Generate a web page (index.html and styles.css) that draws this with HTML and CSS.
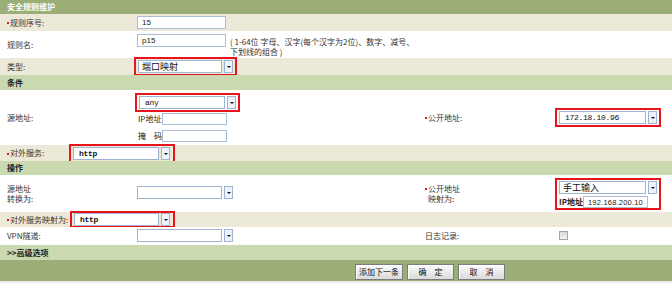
FILE: index.html
```html
<!DOCTYPE html>
<html>
<head>
<meta charset="utf-8">
<link rel="stylesheet" href="styles.css">
</head>
<body>
<div class="panel">
  <div class="hdr">安全规则维护</div>

  <div class="row beige h17">
    <div class="lab"><i class="req"></i>规则序号:</div>
    <div class="ctl"><span class="inp w89">15</span></div>
  </div>

  <div class="row white h27 top">
    <div class="lab self-c">规则名:</div>
    <div class="ctl flex">
      <span class="inp w89 mt3">p15</span>
      <span class="note">( 1-64位 字母、汉字(每个汉字为2位)、数字、减号、<br>下划线的组合 )</span>
    </div>
  </div>

  <div class="row beige h17">
    <div class="lab">类型:</div>
    <div class="ctl">
      <div class="hl">
        <div class="sel"><span class="box cjk w84">端口映射</span><span class="dd"></span></div>
      </div>
    </div>
  </div>

  <div class="sec h15">条件</div>

  <div class="row white h55">
    <div class="lab">源地址:</div>
    <div class="ctl col">
      <div class="hl ml1">
        <div class="sel"><span class="box mono w86">any</span><span class="dd"></span></div>
      </div>
      <div class="pair mt1"><span class="plab">IP地址</span><span class="inp w65"></span></div>
      <div class="pair mt5"><span class="plab">掩　码</span><span class="inp w65"></span></div>
    </div>
    <div class="rlab"><i class="req"></i>公开地址:</div>
    <div class="rctl">
      <div class="hl">
        <div class="sel"><span class="box mono w87">172.18.10.96</span><span class="dd"></span></div>
      </div>
    </div>
  </div>

  <div class="row beige h16">
    <div class="lab n69"><i class="req"></i>对外服务:</div>
    <div class="ctl">
      <div class="hl pr3">
        <div class="sel"><span class="box mono bold w86">http</span><span class="dd"></span></div>
      </div>
    </div>
  </div>

  <div class="sec h14">操作</div>

  <div class="row white h37">
    <div class="lab">源地址<br>转换为:</div>
    <div class="ctl">
      <div class="sel ml3"><span class="box w85"></span><span class="dd"></span></div>
    </div>
    <div class="rlab"><i class="req"></i>公开地址<br><span class="ind">映射为:</span></div>
    <div class="rctl">
      <div class="hl colbox">
        <div class="sel"><span class="box cjk w87">手工输入</span><span class="dd"></span></div>
        <div class="pair2"><span class="plab2">IP地址</span><span class="inp w65 sans">192.168.200.10</span></div>
      </div>
    </div>
  </div>

  <div class="row beige h15">
    <div class="lab n70"><i class="req"></i>对外服务映射为:</div>
    <div class="ctl">
      <div class="hl pr3 short">
        <div class="sel"><span class="box mono bold w85">http</span><span class="dd"></span></div>
      </div>
    </div>
  </div>

  <div class="row white h18">
    <div class="lab">VPN隧道:</div>
    <div class="ctl">
      <div class="sel ml3"><span class="box w85"></span><span class="dd"></span></div>
    </div>
    <div class="rlab">日志记录:</div>
    <div class="rctl"><span class="chk ml4"></span></div>
  </div>

  <div class="sec h15">&gt;&gt;高级选项</div>

  <div class="foot">
    <span class="btn">添加下一条</span>
    <span class="btn">确　定</span>
    <span class="btn">取　消</span>
  </div>
</div>
</body>
</html>
```

FILE: styles.css
```css
* { box-sizing: border-box; margin: 0; padding: 0; }

body {
  width: 672px;
  height: 283px;
  overflow: hidden;
  background: #e9e9e9;
  font-family: "Noto Sans CJK SC", "Liberation Sans", sans-serif;
  font-size: 8px;
  line-height: 10px;
  color: #333;
}

.panel { display: flex; flex-direction: column; }

.hdr {
  height: 14px;
  background: #9cae78;
  color: #fff;
  font-weight: bold;
  padding-left: 7px;
  line-height: 14px;
}

.row { display: flex; align-items: center; }
.row.top { align-items: flex-start; }
.self-c { align-self: center; }
.beige { background: #ece9d8; }
.white { background: #fff; }

.h14 { height: 14px; }
.h15 { height: 15px; }
.h16 { height: 16px; }
.h17 { height: 17px; }
.h18 { height: 18px; }
.h27 { height: 27px; }
.h37 { height: 37px; }
.h55 { height: 55px; }

.sec {
  background: #cbd9b1;
  font-weight: bold;
  color: #222;
  padding-left: 7px;
  display: flex;
  align-items: center;
}

.lab { width: 134px; flex: none; padding-left: 7px; }
.lab.n69 { width: 69px; }
.lab.n70 { width: 70px; }
.ctl { width: 291px; flex: none; }
.ctl.flex { display: flex; align-items: flex-start; }
.ctl.col { display: flex; flex-direction: column; align-items: flex-start; }
.rlab { width: 130px; flex: none; }
.rlab .ind { padding-left: 3px; }
.rctl { flex: 1; }

.req {
  display: inline-block;
  width: 2px;
  height: 2px;
  background: #e8141b;
  margin-right: 1px;
  vertical-align: middle;
}

.inp {
  display: inline-block;
  height: 13px;
  border: 1px solid #a9bcd8;
  background: #fff;
  padding-left: 4px;
  font-family: "Liberation Sans", sans-serif;
  font-size: 8px;
  line-height: 11px;
  color: #222;
  margin-left: 3px;
}
.inp.sans { padding-left: 4px; font-size: 7.5px; letter-spacing: 0.2px; }
.w89 { width: 89px; }
.w65 { width: 65px; height: 12px; margin-left: 0; }
.mt3 { margin-top: 3px; }
.mt1 { margin-top: 1px; }
.mt5 { margin-top: 5px; }
.ml1 { margin-left: 1px; }
.ml3 { margin-left: 3px; }
.ml4 { margin-left: 4px; }

.note { margin-left: 4px; margin-top: 6px; color: #333; }

.hl {
  display: inline-flex;
  border: 2px solid #e8141b;
  padding: 1px 2px 1px 2px;
}
.hl.pr3 { padding-right: 3px; }
.hl.short { padding-top: 0; padding-bottom: 0; }
.hl.colbox { flex-direction: column; padding: 1px 2px 0 2px; gap: 2px; }

.sel { display: inline-flex; gap: 2px; align-items: center; }
.sel .box {
  display: block;
  height: 13px;
  border: 1px solid #9fb3d3;
  background: #fff;
  padding-left: 3px;
  font-size: 9px;
  line-height: 11px;
  color: #111;
  white-space: nowrap;
}
.sel .box.mono {
  font-family: "Liberation Mono", monospace;
  font-size: 8px;
  letter-spacing: -0.3px;
  padding-left: 5px;
}
.sel .box.bold { font-weight: bold; }
.w84 { width: 84px; }
.w85 { width: 85px; }
.w86 { width: 86px; }
.w87 { width: 87px; }

.sel .dd {
  display: block;
  position: relative;
  width: 9px;
  height: 13px;
  border: 1px solid #9fb3d3;
  background: #eef2f9;
}
.sel .dd::after {
  content: "";
  position: absolute;
  left: 2px;
  top: 5px;
  border-left: 2px solid transparent;
  border-right: 2px solid transparent;
  border-top: 2px solid #111;
}

.pair { display: flex; align-items: center; margin-left: 4px; }
.plab { width: 24px; color: #222; }
.pair2 { display: flex; align-items: center; }
.plab2 { width: 24px; color: #222; font-weight: bold; }

.chk {
  display: inline-block;
  width: 9px;
  height: 9px;
  border: 1px solid #a5a5a5;
  background: linear-gradient(#d8d8d8, #f4f4f4);
}

.foot {
  height: 21px;
  background: #9cae78;
  display: flex;
  align-items: flex-start;
  gap: 4px;
  padding: 4px 0 0 355px;
}
.btn {
  display: block;
  width: 48px;
  height: 16px;
  border: 1px solid #7c7c7c;
  background: linear-gradient(#fbfbfb, #dadada);
  box-shadow: inset 1px 1px 0 #fff;
  text-align: center;
  font-size: 8px;
  line-height: 14px;
  color: #111;
}
.btn + .btn { width: 47px; }
```
